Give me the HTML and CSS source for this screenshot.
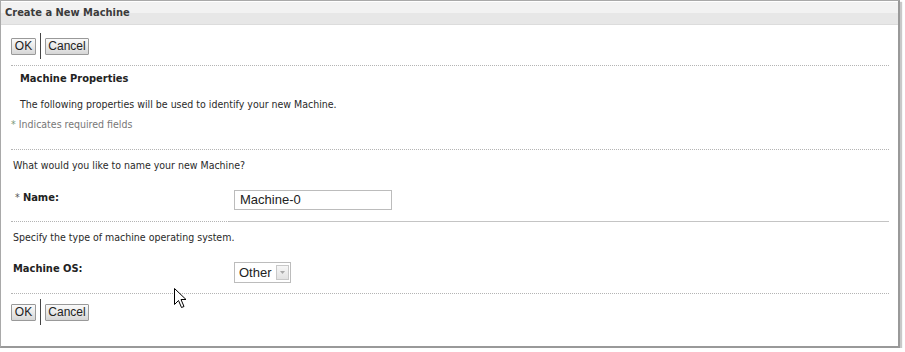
FILE: index.html
```html
<!DOCTYPE html>
<html>
<head>
<meta charset="utf-8">
<link rel="stylesheet" href="styles.css">
</head>
<body>
<div class="window">
  <div class="titlebar">Create a New Machine</div>
  <div class="content">
    <div class="btnbar top">
      <button class="btn ok">OK</button><span class="sep"></span><button class="btn">Cancel</button>
    </div>
    <div class="rule dotted"></div>
    <div class="props">
      <h2 class="props-title">Machine Properties</h2>
      <p class="props-desc">The following properties will be used to identify your new Machine.</p>
    </div>
    <p class="required"><span class="star">*</span> Indicates required fields</p>
    <div class="rule dotted r2"></div>
    <p class="question">What would you like to name your new Machine?</p>
    <div class="field name-row">
      <label class="flabel"><span class="star dark">*</span> <b>Name:</b></label>
      <div class="input">Machine-0</div>
    </div>
    <div class="rule split"><span class="left"></span><span class="right"></span></div>
    <p class="question q2">Specify the type of machine operating system.</p>
    <div class="field os-row">
      <label class="flabel plain"><b>Machine OS:</b></label>
      <div class="select"><span class="val">Other</span><span class="arrow"><svg width="11" height="13" viewBox="0 0 11 13"><path d="M3 5 L8 5 L5.5 8 Z" fill="#a8a8a8"/></svg></span></div>
    </div>
    <div class="rule dotted r3"></div>
    <div class="btnbar bottom">
      <button class="btn ok">OK</button><span class="sep"></span><button class="btn">Cancel</button>
    </div>
  </div>
  <svg class="cursor" width="14" height="22" viewBox="0 0 14 22"><path d="M0.5 0.5 L0.5 16.5 L4.5 12.5 L7.5 19.5 L10 18.5 L7 11.5 L12 11.5 Z" fill="#fff" stroke="#000" stroke-width="1" stroke-linejoin="miter"/></svg>
</div>
</body>
</html>
```
FILE: styles.css
```css
* { box-sizing: border-box; }
html, body { margin: 0; padding: 0; background: #fff; }
body {
  font-family: "DejaVu Sans Condensed", "DejaVu Sans", sans-serif;
  font-size: 10.5px;
  color: #333;
}
.window {
  position: relative;
  width: 900px;
  height: 348px;
  border: 1px solid #a9a9a9;
  border-right: 2px solid #999;
  border-bottom: 2px solid #999;
  box-shadow: 2px 2px 1px #c8c8c8;
  background: #fff;
}
.titlebar {
  margin-top: 1px;
  height: 23px;
  padding: 3px 0 0 4px;
  font-weight: bold;
  font-size: 11px;
  color: #3b3b3b;
  background: linear-gradient(#f2f2f2 0, #f2f2f2 50%, #e7e7e7 50%, #e7e7e7 100%);
  border-bottom: 1px solid #dcdcdc;
  line-height: 16px;
}
.content { padding: 0 9px 0 10px; }
.btnbar {
  display: flex;
  align-items: center;
  height: 26px;
}
.btnbar.top { margin-top: 8px; }
.btnbar.bottom { margin-top: 5px; }
.btn {
  font-family: "Liberation Sans", Arial, sans-serif;
  font-size: 12px;
  color: #222;
  height: 17px;
  line-height: 15px;
  border: 1px solid #999;
  border-radius: 1px;
  background: linear-gradient(#fafafa, #e8e8e8 55%, #d6d6d6);
  margin: 0;
  padding: 0;
}
.btn.ok { width: 25px; }
.btn:not(.ok) { width: 44px; }
.sep {
  display: block;
  width: 1px;
  height: 26px;
  background: #444;
  margin: 0 4px 0 4px;
}
.rule { height: 1px; }
.rule.dotted { border-top: 1px dotted #b4b4b4; margin-top: 6px; }
.props { padding-left: 9px; }
.props-title {
  margin: 6px 0 0;
  font-size: 11px;
  font-weight: bold;
  line-height: 14px;
  color: #222;
}
.props-desc { margin: 11px 0 0; line-height: 14px; color: #2a2a2a; }
.required { margin: 6px 0 0; line-height: 14px; color: #777; }
.star { color: #7a9a7a; }
.star.dark { color: #555; }
.rule.dotted.r2 { margin-top: 18px; }
.question { margin: 8px 0 0 2px; line-height: 14px; color: #2a2a2a; }
.field {
  display: grid;
  grid-template-columns: 223px auto;
  align-items: start;
}
.flabel { padding-left: 4px; line-height: 14px; color: #222; font-size: 11px; }
.flabel b { font-weight: bold; }
.flabel .star { font-size: 10.5px; }
.flabel.plain { padding-left: 2px; }
.name-row { margin-top: 18px; height: 31px; }
.input {
  width: 158px;
  height: 20px;
  border: 1px solid #bcbcbc;
  margin-top: 0;
  font-family: "Liberation Sans", Arial, sans-serif;
  font-size: 13px;
  color: #222;
  padding-left: 5px;
  line-height: 18px;
}
.rule.split { display: flex; margin-top: 0; height: 1px; }
.rule.split .left { width: 218px; border-top: 1px dotted #b4b4b4; }
.rule.split .right { flex: 1; border-top: 1px solid #c4c4c4; }
.q2 { margin-top: 8px; }
.os-row { margin-top: 18px; height: 25px; }
.select {
  display: flex;
  align-items: center;
  width: 57px;
  height: 21px;
  border: 1px solid #bcbcbc;
  margin-top: 0;
  font-family: "Liberation Sans", Arial, sans-serif;
  font-size: 13px;
  color: #222;
  padding-left: 4px;
}
.select .val { flex: 1; line-height: 18px; }
.select .arrow {
  width: 13px;
  height: 15px;
  margin-right: 1px;
  border: 1px solid #c8c8c8;
  background: linear-gradient(#f6f6f6, #e2e2e2);
  display: flex;
  align-items: center;
  justify-content: center;
}
.rule.dotted.r3 { margin-top: 6px; }
.cursor { position: absolute; left: 173px; top: 287px; }
```
